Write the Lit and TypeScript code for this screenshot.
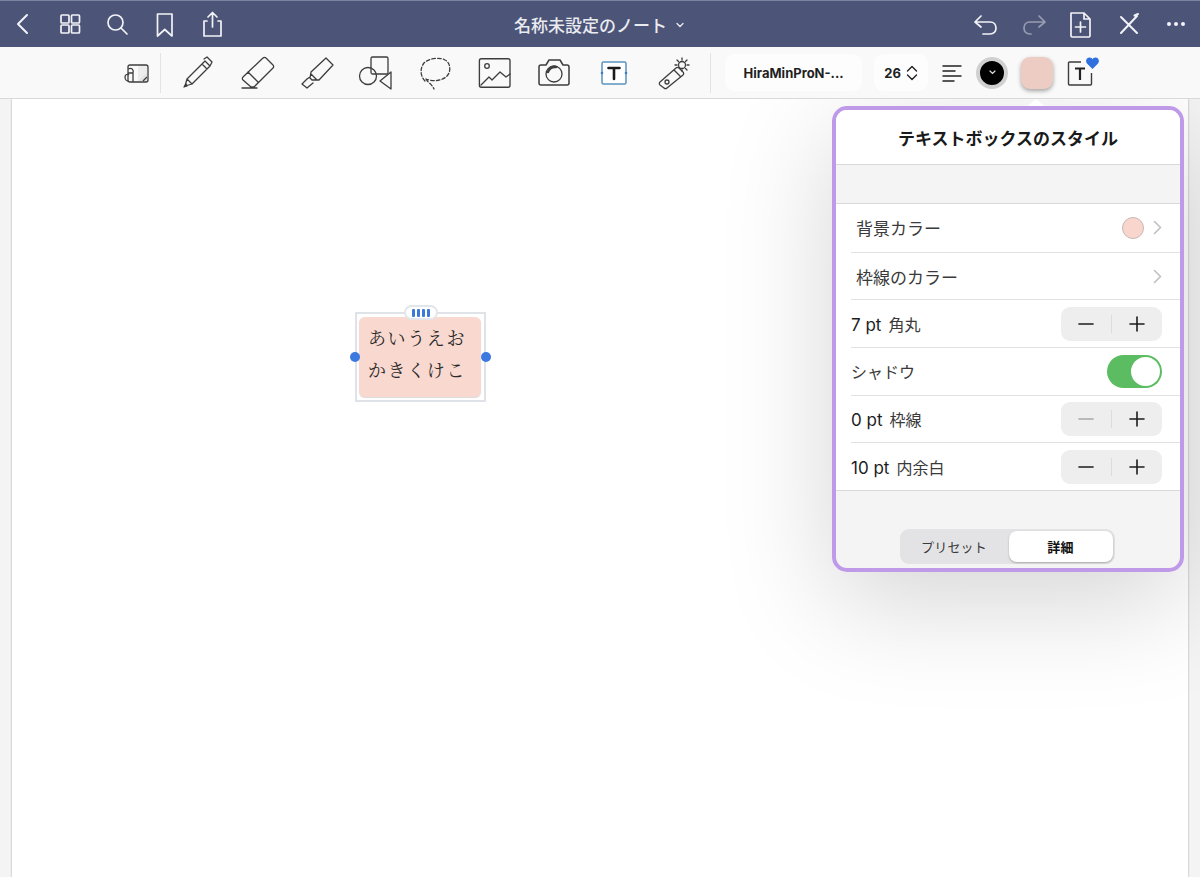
import { LitElement, html, css, svg } from "lit";
import { customElement } from "lit/decorators.js";

// white line icons for the title bar, 28x28
const navIcon = (body: unknown, cls = "") => html`<svg class="nav-icon ${cls}" viewBox="0 0 28 28" fill="none" stroke="currentColor" stroke-width="1.7" stroke-linecap="round" stroke-linejoin="round">${body}</svg>`;

// dark line icons for the tool row, 36x36
const toolIcon = (body: unknown) => html`<svg class="tool-icon" viewBox="0 0 36 36" fill="none" stroke="#3d3d3d" stroke-width="1.3" stroke-linecap="round" stroke-linejoin="round">${body}</svg>`;

const leftNav = [
  svg`<path d="M19 5 L10 14 L19 23" stroke-width="2"/>`,
  svg`<rect x="5" y="5" width="8" height="8" rx="1"/><rect x="15.5" y="5" width="8" height="8" rx="1"/><rect x="5" y="15" width="8" height="8" rx="1"/><rect x="15.5" y="15" width="8" height="8" rx="1"/>`,
  svg`<circle cx="12.500" cy="12.500" r="7.500"/><path d="M18 18 L24 24"/>`,
  svg`<path d="M6.500 4 H21 V26 L13.750 19.500 L6.500 26 Z"/>`,
  svg`<path d="M9 11 H6 V26 H23 V11 H20 M14.500 17 V2.500 M10 7 L14.500 2.500 L19 7"/>`,
];

const rightNav = [
  svg`<path d="M9 6 L3 12 L9 17 M3 12 H18 C22 12 24 15 24 18 C24 21 22 24 18 24 H11"/>`,
  svg`<path d="M19 6 L25 12 L19 17 M25 12 H10 C6 12 4 15 4 18 C4 21 6 24 10 24 H11" opacity="0.45"/>`,
  svg`<path d="M4 3 H17 L23 9 V26 A1.500 1.500 0 0 1 21.500 27 H5.500 A1.500 1.500 0 0 1 4 26 Z M17 3 V9 H23 M13.500 12 V22 M8.500 17 H18.500"/>`,
  svg`<path d="M6 7 L22 23 M22 6 L6 23 M19.500 5.500 L23 4" stroke-width="2"/>`,
];

const tools = [
  svg`<path d="M5 31 L7 24 L25 6 L30 11 L12 29 Z M7 24 L12 29 M24 4 L27 2 L32 7 L30 11 M22 9 L27 14"/><path d="M4 32 L6 29 L7 31 Z" fill="#3d3d3d"/>`,
  svg`<path d="M4 23 L24 4 A2 2 0 0 1 27 4 L34 11 A2 2 0 0 1 34 14 L15 33 H12 L4 26 A2 2 0 0 1 4 23 Z M9 18 L19 28 M3 34 H18" transform="translate(0 -1)"/>`,
  svg`<path d="M12 17 L27 3 L34 10 L20 25 L13 25 L11 23 Z M12 19 L18 25 M8 24 L3 29 L8 33 L14 28 M8 24 L11 22" />`,
  svg`<rect x="13" y="2" width="17" height="17" rx="1.500"/><circle cx="10" cy="21" r="8.500"/><path d="M33 17 V34 L22 26 Z"/>`,
  svg`<path stroke-dasharray="3.500 2.200" d="M7 26 C2 21 2 13 6 8 C11 3 22 2 27 5 C33 8 33 17 29 21 C24 26 15 27 8 24 M8 24 C10 28 14 29 16 34"/>`,
  svg`<rect x="6" y="5" width="34" height="30" rx="2" transform="translate(-3 -1) scale(0.9 0.95)" stroke-width="1.500"/><circle cx="10" cy="11" r="2.300"/><path d="M4 30 L12 22 L15 25 L23 17 L29 22 L33 19"/>`,
  svg`<path d="M3 12 A2 2 0 0 1 5 10 H10 L13 5 H24 L27 10 H31 A2 2 0 0 1 33 12 V28 A2 2 0 0 1 31 30 H5 A2 2 0 0 1 3 28 Z" stroke-width="1.500"/><circle cx="18" cy="19" r="8"/><path d="M12 17 A7 7 0 0 1 20 12" stroke-width="2.500"/>`,
];

const wand = svg`<path d="M5 27 L21 13 A2 2 0 0 1 24 13 L28 17 A2 2 0 0 1 28 20 L12 33 A2 2 0 0 1 9 33 L5 30 A2 2 0 0 1 5 27 Z M19 15 L25 21"/><circle cx="12" cy="27" r="2"/><circle cx="27" cy="10" r="3.500"/><path d="M27 3 V5 M27 15 V16 M20 10 H22 M32 10 H34 M22 5 L23.500 6.500 M32 5 L30.500 6.500 M32 15 L30.500 13.500"/>`;

const stepperRows = [
  { value: "7 pt", name: "角丸", muted: false },
  { value: "0 pt", name: "枠線", muted: true },
  { value: "10 pt", name: "内余白", muted: false },
];

@customElement("app-root")
export class AppRoot extends LitElement {
  static styles = css`
    :host {
      display: flex;
      flex-direction: column;
      height: 100vh;
      overflow: hidden;
      font-family: "Inter", "Noto Sans CJK JP", sans-serif;
      color: #1c1c1e;
    }

    .topbar {
      flex: none;
      height: 47px;
      box-sizing: border-box;
      border-top: 1px solid #7a83a0;
      background: #4c5578;
      color: #f2f3f6;
      display: grid;
      grid-template-columns: 1fr auto 1fr;
      align-items: center;
      padding: 0 10px 0 8px;
    }

    .nav {
      display: flex;
      align-items: center;
      gap: 19.5px;
    }

    .nav.right {
      justify-content: flex-end;
    }

    .nav-icon {
      width: 28px;
      height: 28px;
      display: block;
    }

    .title {
      display: flex;
      align-items: center;
      gap: 9px;
      font-family: "Noto Sans CJK JP", sans-serif;
      font-size: 17px;
      font-weight: 500;
      color: #e9ebf0;
    }

    .title svg {
      width: 8px;
      height: 6px;
      margin-top: 2px;
    }

    .dots {
      display: flex;
      gap: 3px;
      width: 28px;
      justify-content: center;
    }

    .dots i {
      width: 4px;
      height: 4px;
      border-radius: 50%;
      background: #f2f3f6;
    }

    .toolbar {
      flex: none;
      height: 52px;
      box-sizing: border-box;
      background: #f9f9f9;
      border-bottom: 1px solid #d9d9d9;
      display: flex;
      align-items: center;
      padding-left: 123px;
    }

    .tool-icon {
      width: 36px;
      height: 36px;
      display: block;
      flex: none;
    }

    .divider {
      width: 1px;
      height: 40px;
      background: #e3e3e3;
      flex: none;
    }

    .page-switch {
      width: 28px;
      height: 28px;
      flex: none;
    }

    .tools {
      display: flex;
      align-items: center;
      gap: 23.4px;
      margin-left: 19px;
    }

    .font-pill,
    .size-pill {
      height: 37px;
      background: #fdfdfd;
      border-radius: 9px;
      display: flex;
      align-items: center;
      justify-content: center;
      font-size: 13px;
      font-weight: 700;
      color: #1f1f1f;
      flex: none;
    }

    .font-pill {
      width: 137px;
      margin-left: 14px;
    }

    .size-pill {
      width: 54px;
      margin-left: 12px;
      gap: 5px;
    }

    .size-pill svg {
      width: 12px;
      height: 16px;
    }

    .align {
      width: 22px;
      height: 20px;
      margin-left: 13px;
      flex: none;
    }

    .color-well {
      width: 32px;
      height: 32px;
      box-sizing: border-box;
      border-radius: 50%;
      background: #000;
      border: 4px solid #d0d0d0;
      margin-left: 13px;
      display: grid;
      place-items: center;
      flex: none;
    }

    .color-well svg {
      width: 7px;
      height: 5px;
    }

    .swatch {
      width: 32px;
      height: 32px;
      border-radius: 9px;
      background: #edcdc3;
      box-shadow: 0 2px 4px rgba(0, 0, 0, 0.35);
      margin-left: 13px;
      flex: none;
    }

    .style-toggle {
      position: relative;
      width: 26px;
      height: 26px;
      margin-left: 14px;
      flex: none;
    }

    .style-toggle .tool-icon {
      width: 26px;
      height: 26px;
    }

    .heart {
      position: absolute;
      top: -3px;
      right: -6px;
      width: 13px;
      height: 12px;
    }

    .main {
      flex: 1;
      position: relative;
      background: #f4f4f4;
      padding: 0 12px;
      overflow: hidden;
    }

    .sheet {
      height: 100%;
      background: #fff;
      box-shadow: 0 0 2px rgba(0, 0, 0, 0.35);
    }

    .textbox {
      position: absolute;
      left: 355px;
      top: 213px;
      width: 131px;
      height: 90px;
      box-sizing: border-box;
      border: 2px solid #dfe2e6;
      padding: 3px 3px 3px 2px;
    }

    .textbox-fill {
      height: 100%;
      box-sizing: border-box;
      background: #f9d8cf;
      border-radius: 6px;
      box-shadow: 0 1px 1px rgba(0, 0, 0, 0.15);
      padding: 4px 0 0 9px;
      font-family: "Noto Serif CJK JP", "Noto Sans CJK JP", serif;
      font-size: 18px;
      letter-spacing: 1.6px;
      line-height: 32px;
      color: #2a2a2a;
      white-space: nowrap;
    }

    .handle {
      position: absolute;
      left: 47px;
      top: -9px;
      width: 34px;
      height: 15px;
      box-sizing: border-box;
      background: #fff;
      border: 2px solid #e2e5ea;
      border-radius: 9px;
      display: flex;
      justify-content: center;
      align-items: center;
      gap: 2px;
    }

    .handle i {
      width: 3px;
      height: 8px;
      border-radius: 1px;
      background: #3b78d8;
    }

    .dot {
      position: absolute;
      top: 38px;
      width: 10px;
      height: 10px;
      border-radius: 50%;
      background: #3b78e0;
    }

    .dot.l {
      left: -7px;
    }

    .dot.r {
      right: -7px;
    }

    .arrow {
      position: absolute;
      left: 1026px;
      top: 0;
      width: 0;
      height: 0;
      border-left: 10px solid transparent;
      border-right: 10px solid transparent;
      border-bottom: 8px solid #fff;
    }

    .panel {
      position: absolute;
      top: 7px;
      right: 16px;
      width: 352px;
      height: 466px;
      box-sizing: border-box;
      border: 4px solid #bf9ae8;
      border-radius: 15px;
      background: #f4f4f5;
      overflow: hidden;
      display: flex;
      flex-direction: column;
      font-family: "Noto Sans CJK JP", sans-serif;
    }

    .panel-shadow {
      position: absolute;
      top: 7px;
      right: 16px;
      width: 352px;
      height: 466px;
      border-radius: 15px;
      box-shadow: 0 30px 110px rgba(0, 0, 0, 0.17);
    }

    .panel-title {
      flex: none;
      height: 55px;
      box-sizing: border-box;
      background: #fff;
      border-bottom: 1px solid #d9d9dc;
      display: flex;
      align-items: center;
      justify-content: center;
      font-size: 17px;
      font-weight: 700;
      color: #1a1a1a;
    }

    .spacer {
      flex: none;
      height: 38px;
    }

    .rows {
      flex: none;
      background: #fff;
      border-top: 1px solid #d9d9dc;
      border-bottom: 1px solid #d9d9dc;
    }

    .row {
      height: 47.7px;
      box-sizing: border-box;
      margin-left: 15px;
      padding-right: 18px;
      display: flex;
      align-items: center;
      justify-content: space-between;
      font-size: 16px;
      color: #2b2b2b;
    }

    .row + .row {
      border-top: 1px solid #e2e2e4;
    }

    .row.link {
      padding-left: 5px;
      font-size: 17px;
      color: #3a3a3a;
      font-weight: 400;
    }

    .row-label {
      display: flex;
      gap: 7px;
      align-items: baseline;
      color: #1c1c1e;
    }

    .row-label b {
      font-family: "Inter", sans-serif;
      font-weight: 400;
      font-size: 17px;
    }

    .row-label span {
      color: #3a3a3a;
    }

    .trail {
      display: flex;
      align-items: center;
      gap: 9px;
    }

    .trail svg {
      width: 9px;
      height: 15px;
      display: block;
    }

    .chip {
      width: 22px;
      height: 22px;
      box-sizing: border-box;
      border-radius: 50%;
      background: #f8d6cd;
      border: 1px solid #c9b7b1;
    }

    .stepper {
      width: 101px;
      height: 34px;
      border-radius: 9px;
      background: #eeeeef;
      display: flex;
      align-items: center;
    }

    .stepper svg {
      flex: 1;
      height: 16px;
      min-width: 0;
    }

    .stepper hr {
      width: 1px;
      height: 18px;
      margin: 0;
      border: 0;
      background: #dcdcde;
    }

    .toggle {
      width: 55px;
      height: 33px;
      box-sizing: border-box;
      border-radius: 17px;
      background: #5cbc62;
      padding: 2px;
      display: flex;
      justify-content: flex-end;
    }

    .toggle i {
      width: 29px;
      height: 29px;
      border-radius: 50%;
      background: #fff;
    }

    .footer {
      flex: 1;
      display: flex;
      justify-content: center;
      padding-top: 38px;
      margin-left: -2px;
    }

    .segment {
      width: 215px;
      height: 35px;
      box-sizing: border-box;
      border-radius: 9px;
      background: #e3e3e5;
      padding: 2px;
      display: flex;
      font-size: 13px;
    }

    .segment div {
      display: flex;
      align-items: center;
      justify-content: center;
      color: #3a3a3a;
      letter-spacing: 0.2px;
      flex: 1;
      padding-right: 2px;
    }

    .segment .active {
      flex: none;
      width: 104px;
      padding: 0;
      background: #fff;
      border-radius: 8px;
      box-shadow: 0 1px 2px rgba(0, 0, 0, 0.25);
      color: #111;
      font-weight: 700;
    }
  `;

  private stepper(muted: boolean) {
    return html`<div class="stepper">
      <svg viewBox="0 0 16 16" stroke=${muted ? "#a8a8aa" : "#1c1c1e"} stroke-width="1.600" stroke-linecap="round"><path d="M1 8 H15"/></svg>
      <hr />
      <svg viewBox="0 0 16 16" stroke="#1c1c1e" stroke-width="1.600" stroke-linecap="round"><path d="M1 8 H15 M8 1 V15"/></svg>
    </div>`;
  }

  private chevron() {
    return html`<svg viewBox="0 0 9 15" fill="none" stroke="#c0c0c2" stroke-width="1.600" stroke-linecap="round" stroke-linejoin="round"><path d="M1.500 1.500 L7.500 7.500 L1.500 13.500"/></svg>`;
  }

  render() {
    return html`
      <header class="topbar">
        <div class="nav">${leftNav.map((d) => navIcon(d))}</div>
        <div class="title">
          名称未設定のノート
          <svg viewBox="0 0 8 6" fill="none" stroke="#e9ebf0" stroke-width="1.300" stroke-linecap="round"><path d="M1 1.500 L4 4.500 L7 1.500"/></svg>
        </div>
        <div class="nav right">
          ${rightNav.map((d) => navIcon(d))}
          <div class="dots"><i></i><i></i><i></i></div>
        </div>
      </header>

      <div class="toolbar">
        <svg class="page-switch" viewBox="0 0 28 28" fill="none" stroke="#3d3d3d" stroke-width="1.300">
          <path d="M15 22 L24 13 V22 Z" fill="#e2e2e2" stroke="none"/>
          <path d="M15 6 H24 V13 L15 22 Z" fill="#ececec" stroke="none"/>
          <rect x="5" y="6" width="20" height="17" rx="2"/>
          <path d="M5 10 C9 8 11 11 10 14 V23 M2 18 C2 15 5 15 6 16 M2 18 C2 21 4 22 5 22 M5 14 H10 M20 22 L24 18"/>
        </svg>
        <span class="divider" style="margin-left:9px"></span>
        <div class="tools">
          ${tools.map((d) => toolIcon(d))}
          <svg class="tool-icon" viewBox="0 0 36 36" fill="none" stroke-linecap="round">
            <rect x="6" y="7" width="24" height="22" rx="1.500" fill="#fff" stroke="#5b93bd" stroke-width="1.500"/>
            <circle cx="6" cy="18" r="1.300" fill="#3a7dc0"/>
            <circle cx="30" cy="18" r="1.300" fill="#3a7dc0"/>
            <path d="M12.500 13 H23.500 M18 13 V24" stroke="#1c1c1e" stroke-width="2.600"/>
          </svg>
          ${toolIcon(wand)}
        </div>
        <span class="divider" style="margin-left:19px"></span>
        <div class="font-pill">HiraMinProN-...</div>
        <div class="size-pill">
          26
          <svg viewBox="0 0 12 16" fill="none" stroke="#1f1f1f" stroke-width="1.400" stroke-linecap="round" stroke-linejoin="round"><path d="M1.500 6 L6 1.500 L10.500 6 M1.500 10 L6 14.500 L10.500 10"/></svg>
        </div>
        <svg class="align" viewBox="0 0 22 20" stroke="#222" stroke-width="1.400" stroke-linecap="round"><path d="M2 3 H20 M2 8 H14 M2 13 H20 M2 18 H13"/></svg>
        <div class="color-well">
          <svg viewBox="0 0 7 5" fill="none" stroke="#ddd" stroke-width="1.200" stroke-linecap="round"><path d="M1 1 L3.500 3.500 L6 1"/></svg>
        </div>
        <div class="swatch"></div>
        <div class="style-toggle">
          <svg class="tool-icon" viewBox="0 0 26 26" fill="none" stroke="#3d3d3d" stroke-width="1.400">
            <path d="M14 2 H2.500 A1 1 0 0 0 1.500 3 V24 A1 1 0 0 0 2.500 25 H23.500 A1 1 0 0 0 24.500 24 V13"/>
            <path d="M8 8.500 H18 M13 8.500 V20" stroke="#222" stroke-width="2.200"/>
          </svg>
          <svg class="heart" viewBox="0 0 13 12"><path d="M6.500 12 L1 6.500 C-1 4 0.500 0.500 3.500 0.500 C5 0.500 6 1.300 6.500 2.200 C7 1.300 8 0.500 9.500 0.500 C12.500 0.500 14 4 12 6.500 Z" fill="#2f6fe0"/></svg>
        </div>
      </div>

      <main class="main">
        <div class="sheet"></div>

        <div class="textbox">
          <div class="textbox-fill">あいうえお<br />かきくけこ</div>
          <div class="handle"><i></i><i></i><i></i><i></i></div>
          <span class="dot l"></span>
          <span class="dot r"></span>
        </div>

        <div class="panel-shadow"></div>
        <div class="arrow"></div>
        <section class="panel">
          <div class="panel-title">テキストボックスのスタイル</div>
          <div class="spacer"></div>
          <div class="rows">
            <div class="row link">
              背景カラー
              <div class="trail"><span class="chip"></span>${this.chevron()}</div>
            </div>
            <div class="row link">
              枠線のカラー
              <div class="trail">${this.chevron()}</div>
            </div>
            <div class="row">
              <div class="row-label"><b>${stepperRows[0].value}</b><span>${stepperRows[0].name}</span></div>
              ${this.stepper(stepperRows[0].muted)}
            </div>
            <div class="row">
              <div class="row-label"><span>シャドウ</span></div>
              <div class="toggle"><i></i></div>
            </div>
            ${stepperRows.slice(1).map(
              (r) => html`<div class="row">
                <div class="row-label"><b>${r.value}</b><span>${r.name}</span></div>
                ${this.stepper(r.muted)}
              </div>`,
            )}
          </div>
          <div class="footer">
            <div class="segment">
              <div>プリセット</div>
              <div class="active">詳細</div>
            </div>
          </div>
        </section>
      </main>
    `;
  }
}
